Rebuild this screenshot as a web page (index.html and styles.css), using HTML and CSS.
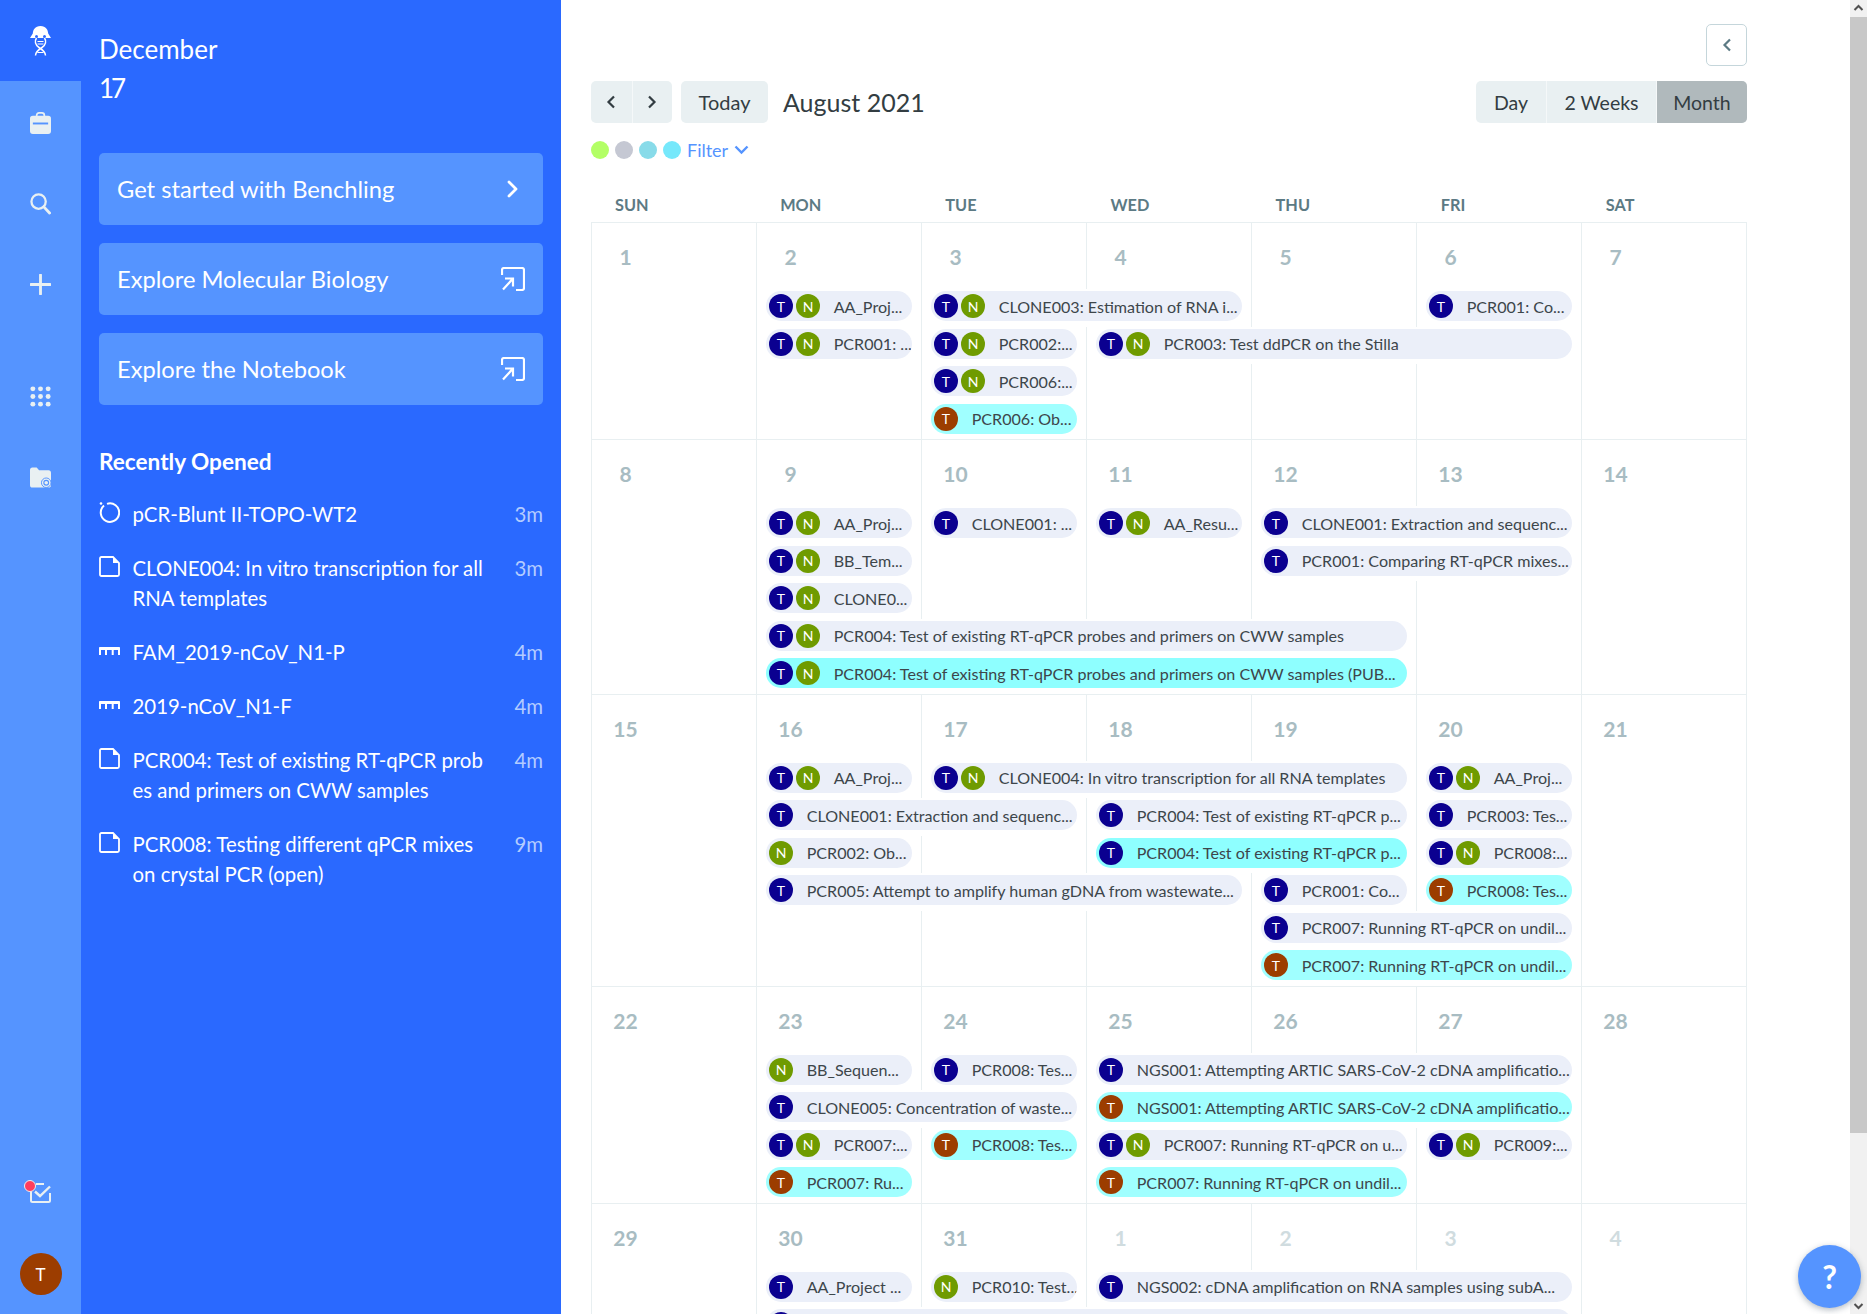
FILE: index.html
```html
<!DOCTYPE html>
<html lang="en">
<head>
<meta charset="utf-8">
<title>Benchling</title>
<link rel="stylesheet" href="styles.css">
</head>
<body>
<div class="app">
  <nav class="rail">
    <div class="rail-logo">
      <svg class="logo" viewBox="0 0 21 30" width="21" height="30"><path d="M10.5 0C5 0 3 4 2.800 7.500L0 12H21L18.200 7.500C18 4 16 0 10.500 0z" fill="#fff"/><circle cx="6.500" cy="10.500" r="1.500" fill="#2a69ff"/><circle cx="14.500" cy="10.500" r="1.500" fill="#2a69ff"/><path d="M6.500 12C4.500 15 5 19 9 21.500C13 24 15.500 26 15.500 29.500M14.500 12C16.500 15 16 19 12 21.500C8 24 5.500 26 5.500 29.500" fill="none" stroke="#fff" stroke-width="1.500"/><path d="M7.500 15.500h6M7.500 18h6M7.500 26.500h6" stroke="#fff" stroke-width="1.200"/></svg>
    </div>
    <div class="rail-body">
      <a class="rail-btn"><svg viewBox="0 0 22 23" width="21" height="22"><path d="M7 5V3.500C7 2 8 1 9.500 1h3C14 1 15 2 15 3.500V5" fill="none" stroke="#e9f0f2" stroke-width="1.800"/><rect y="4" width="22" height="19" rx="3" fill="#e9f0f2"/><rect x="3" y="11" width="16" height="2" fill="#5594ff"/></svg></a>
      <a class="rail-btn"><svg viewBox="0 0 22 23" width="21" height="22"><circle cx="9" cy="9" r="7.500" fill="none" stroke="#e9f0f2" stroke-width="2.400"/><path d="M14.500 14.500l6 6.500" stroke="#e9f0f2" stroke-width="3" stroke-linecap="round"/></svg></a>
      <a class="rail-btn"><svg viewBox="0 0 22 22" width="21" height="21"><path d="M11 1v20M1 11h20" stroke="#e9f0f2" stroke-width="3" stroke-linecap="round"/></svg></a>
      <a class="rail-btn rail-gap"><svg viewBox="0 0 22 22" width="21" height="21" fill="#e9f0f2"><circle cx="3" cy="3" r="2.600"/><circle cx="11" cy="3" r="2.600"/><circle cx="19" cy="3" r="2.600"/><circle cx="3" cy="11" r="2.600"/><circle cx="11" cy="11" r="2.600"/><circle cx="19" cy="11" r="2.600"/><circle cx="3" cy="19" r="2.600"/><circle cx="11" cy="19" r="2.600"/><circle cx="19" cy="19" r="2.600"/></svg></a>
      <a class="rail-btn"><svg viewBox="0 0 22 22" width="21" height="21"><path d="M0 3C0 1.500 1 .5 2.500 .5H7L9.500 3.500H19.500C21 3.500 22 4.500 22 6V19C22 20.500 21 21.500 19.500 21.500H2.500C1 21.500 0 20.500 0 19z" fill="#e9f0f2"/><circle cx="17" cy="16.500" r="5" fill="#e9f0f2" stroke="#5594ff" stroke-width="1"/><circle cx="17" cy="16.500" r="2.500" fill="none" stroke="#5594ff" stroke-width="1.200"/></svg></a>
      <div class="rail-foot">
        <a class="task"><svg viewBox="0 0 21 20" width="21" height="20"><path d="M14 1H6M1 8V17.500C1 18.500 1.500 19 2.500 19H18.500C19.500 19 20 18.500 20 17.500V10" fill="none" stroke="#e9f0f2" stroke-width="2"/><path d="M5 8.500L10 13L20 3.500" fill="none" stroke="#e9f0f2" stroke-width="2.400"/></svg><span class="task-dot"></span></a>
        <span class="me">T</span>
      </div>
    </div>
  </nav>

  <aside class="panel">
    <div class="date date-month">December</div>
    <div class="date date-day">17</div>
    <div class="cards">
      <a class="card">Get started with Benchling<svg class="card-chev" viewBox="0 0 12 18" width="12" height="18"><path d="M2 2l7 7-7 7" fill="none" stroke="#fff" stroke-width="2.800" stroke-linecap="round" stroke-linejoin="round"/></svg></a>
      <a class="card">Explore Molecular Biology<svg viewBox="0 0 24 24" width="24" height="24"><path d="M1 8V3C1 1.800 1.800 1 3 1H21C22.200 1 23 1.800 23 3V21C23 22.200 22.200 23 21 23H15M4 11.500H12V19.500M12 11.500L2 22.500" fill="none" stroke="#fff" stroke-width="2.200"/></svg></a>
      <a class="card">Explore the Notebook<svg viewBox="0 0 24 24" width="24" height="24"><path d="M1 8V3C1 1.800 1.800 1 3 1H21C22.200 1 23 1.800 23 3V21C23 22.200 22.200 23 21 23H15M4 11.500H12V19.500M12 11.500L2 22.500" fill="none" stroke="#fff" stroke-width="2.200"/></svg></a>
    </div>
    <h2 class="recent-title">Recently Opened</h2>
    <ul class="recent">
      <li class="item"><svg viewBox="0 0 21 21" width="21" height="21"><path d="M5 3.600A9.200 9.200 0 1 0 8 1.900" fill="none" stroke="#fff" stroke-width="2"/><circle cx="2" cy="1.500" r="1.300" fill="#fff"/></svg><span class="item-name">pCR-Blunt II-TOPO-WT2</span><span class="item-time">3m</span></li>
      <li class="item"><svg viewBox="0 0 21 21" width="21" height="21"><path d="M2.500 1H14L20 7V18.500C20 19.500 19.500 20 18.500 20H2.500C1.500 20 1 19.500 1 18.500V2.500C1 1.500 1.500 1 2.500 1z" fill="none" stroke="#fff" stroke-width="1.800"/><path d="M14 1V7H20z" fill="#fff"/></svg><span class="item-name">CLONE004: In vitro transcription for all<br>RNA templates</span><span class="item-time">3m</span></li>
      <li class="item"><svg class="ruler" viewBox="0 0 21 8" width="21" height="8"><path d="M1 0H20C20.600 0 21 .4 21 1V8H19V3H14.700V8H12.700V3H8V8H6V3H2V8H0V1C0 .4 .4 0 1 0z" fill="#fff"/></svg><span class="item-name">FAM_2019-nCoV_N1-P</span><span class="item-time">4m</span></li>
      <li class="item"><svg class="ruler" viewBox="0 0 21 8" width="21" height="8"><path d="M1 0H20C20.600 0 21 .4 21 1V8H19V3H14.700V8H12.700V3H8V8H6V3H2V8H0V1C0 .4 .4 0 1 0z" fill="#fff"/></svg><span class="item-name">2019-nCoV_N1-F</span><span class="item-time">4m</span></li>
      <li class="item"><svg viewBox="0 0 21 21" width="21" height="21"><path d="M2.500 1H14L20 7V18.500C20 19.500 19.500 20 18.500 20H2.500C1.500 20 1 19.500 1 18.500V2.500C1 1.500 1.500 1 2.500 1z" fill="none" stroke="#fff" stroke-width="1.800"/><path d="M14 1V7H20z" fill="#fff"/></svg><span class="item-name">PCR004: Test of existing RT-qPCR prob<br>es and primers on CWW samples</span><span class="item-time">4m</span></li>
      <li class="item"><svg viewBox="0 0 21 21" width="21" height="21"><path d="M2.500 1H14L20 7V18.500C20 19.500 19.500 20 18.500 20H2.500C1.500 20 1 19.500 1 18.500V2.500C1 1.500 1.500 1 2.500 1z" fill="none" stroke="#fff" stroke-width="1.800"/><path d="M14 1V7H20z" fill="#fff"/></svg><span class="item-name">PCR008: Testing different qPCR mixes<br>on crystal PCR (open)</span><span class="item-time">9m</span></li>
    </ul>
  </aside>

  <main class="main">
    <div class="collapse-row"><button class="collapse"><svg viewBox="0 0 10 14" width="10" height="14"><path d="M8 1.500L2.500 7L8 12.500" fill="none" stroke="#5c7a84" stroke-width="2.200"/></svg></button></div>
    <div class="toolbar">
      <div class="seg">
        <button class="seg-btn nav"><svg viewBox="0 0 10 14" width="10" height="14"><path d="M8 1.500L2.500 7L8 12.500" fill="none" stroke="#333d42" stroke-width="2.200"/></svg></button>
        <button class="seg-btn nav"><svg viewBox="0 0 10 14" width="10" height="14"><path d="M2 1.500L7.500 7L2 12.500" fill="none" stroke="#333d42" stroke-width="2.200"/></svg></button>
      </div>
      <button class="today">Today</button>
      <h1 class="month-title">August 2021</h1>
      <div class="seg seg-right">
        <button class="seg-btn view v-day">Day</button>
        <button class="seg-btn view v-2w">2 Weeks</button>
        <button class="seg-btn view v-month active">Month</button>
      </div>
    </div>
    <div class="filters">
      <span class="dot green"></span><span class="dot grey"></span><span class="dot teal"></span><span class="dot sky"></span>
      <a class="filter">Filter<svg viewBox="0 0 15 10" width="15" height="10"><path d="M1.500 1.500L7.500 7.500L13.500 1.500" fill="none" stroke="#5594ff" stroke-width="2.400"/></svg></a>
    </div>
    <div class="dow"><span>SUN</span><span>MON</span><span>TUE</span><span>WED</span><span>THU</span><span>FRI</span><span>SAT</span></div>
    <div class="cal">
      <section class="week w4">
        <div class="day c1"><b>1</b></div><div class="day c2"><b>2</b></div><div class="day c3"><b>3</b></div><div class="day c4"><b>4</b></div><div class="day c5"><b>5</b></div><div class="day c6"><b>6</b></div><div class="day c7"><b>7</b></div>
        <div class="ev c2 r1"><div class="pill"><i class="av t">T</i><i class="av n">N</i><span>AA_Proj...</span></div></div>
        <div class="ev c3 s2 r1"><div class="pill"><i class="av t">T</i><i class="av n">N</i><span>CLONE003: Estimation of RNA i...</span></div></div>
        <div class="ev c6 r1"><div class="pill"><i class="av t">T</i><span>PCR001: Co...</span></div></div>
        <div class="ev c2 r2"><div class="pill"><i class="av t">T</i><i class="av n">N</i><span>PCR001: ...</span></div></div>
        <div class="ev c3 r2"><div class="pill"><i class="av t">T</i><i class="av n">N</i><span>PCR002:...</span></div></div>
        <div class="ev c4 s3 r2"><div class="pill"><i class="av t">T</i><i class="av n">N</i><span>PCR003: Test ddPCR on the Stilla</span></div></div>
        <div class="ev c3 r3"><div class="pill"><i class="av t">T</i><i class="av n">N</i><span>PCR006:...</span></div></div>
        <div class="ev c3 r4"><div class="pill cy"><i class="av b">T</i><span>PCR006: Ob...</span></div></div>
      </section>
      <section class="week w5">
        <div class="day c1"><b>8</b></div><div class="day c2"><b>9</b></div><div class="day c3"><b>10</b></div><div class="day c4"><b>11</b></div><div class="day c5"><b>12</b></div><div class="day c6"><b>13</b></div><div class="day c7"><b>14</b></div>
        <div class="ev c2 r1"><div class="pill"><i class="av t">T</i><i class="av n">N</i><span>AA_Proj...</span></div></div>
        <div class="ev c3 r1"><div class="pill"><i class="av t">T</i><span>CLONE001: ...</span></div></div>
        <div class="ev c4 r1"><div class="pill"><i class="av t">T</i><i class="av n">N</i><span>AA_Resu...</span></div></div>
        <div class="ev c5 s2 r1"><div class="pill"><i class="av t">T</i><span>CLONE001: Extraction and sequenc...</span></div></div>
        <div class="ev c2 r2"><div class="pill"><i class="av t">T</i><i class="av n">N</i><span>BB_Tem...</span></div></div>
        <div class="ev c5 s2 r2"><div class="pill"><i class="av t">T</i><span>PCR001: Comparing RT-qPCR mixes...</span></div></div>
        <div class="ev c2 r3"><div class="pill"><i class="av t">T</i><i class="av n">N</i><span>CLONE0...</span></div></div>
        <div class="ev c2 s4 r4"><div class="pill"><i class="av t">T</i><i class="av n">N</i><span>PCR004: Test of existing RT-qPCR probes and primers on CWW samples</span></div></div>
        <div class="ev c2 s4 r5"><div class="pill cy2"><i class="av t">T</i><i class="av n">N</i><span>PCR004: Test of existing RT-qPCR probes and primers on CWW samples (PUB...</span></div></div>
      </section>
      <section class="week w6">
        <div class="day c1"><b>15</b></div><div class="day c2"><b>16</b></div><div class="day c3"><b>17</b></div><div class="day c4"><b>18</b></div><div class="day c5"><b>19</b></div><div class="day c6"><b>20</b></div><div class="day c7"><b>21</b></div>
        <div class="ev c2 r1"><div class="pill"><i class="av t">T</i><i class="av n">N</i><span>AA_Proj...</span></div></div>
        <div class="ev c3 s3 r1"><div class="pill"><i class="av t">T</i><i class="av n">N</i><span>CLONE004: In vitro transcription for all RNA templates</span></div></div>
        <div class="ev c6 r1"><div class="pill"><i class="av t">T</i><i class="av n">N</i><span>AA_Proj...</span></div></div>
        <div class="ev c2 s2 r2"><div class="pill"><i class="av t">T</i><span>CLONE001: Extraction and sequenc...</span></div></div>
        <div class="ev c4 s2 r2"><div class="pill"><i class="av t">T</i><span>PCR004: Test of existing RT-qPCR p...</span></div></div>
        <div class="ev c6 r2"><div class="pill"><i class="av t">T</i><span>PCR003: Tes...</span></div></div>
        <div class="ev c2 r3"><div class="pill"><i class="av n">N</i><span>PCR002: Ob...</span></div></div>
        <div class="ev c4 s2 r3"><div class="pill cy2"><i class="av t">T</i><span>PCR004: Test of existing RT-qPCR p...</span></div></div>
        <div class="ev c6 r3"><div class="pill"><i class="av t">T</i><i class="av n">N</i><span>PCR008:...</span></div></div>
        <div class="ev c2 s3 r4"><div class="pill"><i class="av t">T</i><span>PCR005: Attempt to amplify human gDNA from wastewate...</span></div></div>
        <div class="ev c5 r4"><div class="pill"><i class="av t">T</i><span>PCR001: Co...</span></div></div>
        <div class="ev c6 r4"><div class="pill cy"><i class="av b">T</i><span>PCR008: Tes...</span></div></div>
        <div class="ev c5 s2 r5"><div class="pill"><i class="av t">T</i><span>PCR007: Running RT-qPCR on undil...</span></div></div>
        <div class="ev c5 s2 r6"><div class="pill cy"><i class="av b">T</i><span>PCR007: Running RT-qPCR on undil...</span></div></div>
      </section>
      <section class="week w4">
        <div class="day c1"><b>22</b></div><div class="day c2"><b>23</b></div><div class="day c3"><b>24</b></div><div class="day c4"><b>25</b></div><div class="day c5"><b>26</b></div><div class="day c6"><b>27</b></div><div class="day c7"><b>28</b></div>
        <div class="ev c2 r1"><div class="pill"><i class="av n">N</i><span>BB_Sequen...</span></div></div>
        <div class="ev c3 r1"><div class="pill"><i class="av t">T</i><span>PCR008: Tes...</span></div></div>
        <div class="ev c4 s3 r1"><div class="pill"><i class="av t">T</i><span>NGS001: Attempting ARTIC SARS-CoV-2 cDNA amplificatio...</span></div></div>
        <div class="ev c2 s2 r2"><div class="pill"><i class="av t">T</i><span>CLONE005: Concentration of waste...</span></div></div>
        <div class="ev c4 s3 r2"><div class="pill cy"><i class="av b">T</i><span>NGS001: Attempting ARTIC SARS-CoV-2 cDNA amplificatio...</span></div></div>
        <div class="ev c2 r3"><div class="pill"><i class="av t">T</i><i class="av n">N</i><span>PCR007:...</span></div></div>
        <div class="ev c3 r3"><div class="pill cy"><i class="av b">T</i><span>PCR008: Tes...</span></div></div>
        <div class="ev c4 s2 r3"><div class="pill"><i class="av t">T</i><i class="av n">N</i><span>PCR007: Running RT-qPCR on u...</span></div></div>
        <div class="ev c6 r3"><div class="pill"><i class="av t">T</i><i class="av n">N</i><span>PCR009:...</span></div></div>
        <div class="ev c2 r4"><div class="pill cy"><i class="av b">T</i><span>PCR007: Ru...</span></div></div>
        <div class="ev c4 s2 r4"><div class="pill cy"><i class="av b">T</i><span>PCR007: Running RT-qPCR on undil...</span></div></div>
      </section>
      <section class="week w4">
        <div class="day c1"><b>29</b></div><div class="day c2"><b>30</b></div><div class="day c3"><b>31</b></div><div class="day c4 other"><b>1</b></div><div class="day c5 other"><b>2</b></div><div class="day c6 other"><b>3</b></div><div class="day c7 other"><b>4</b></div>
        <div class="ev c2 r1"><div class="pill"><i class="av t">T</i><span>AA_Project ...</span></div></div>
        <div class="ev c3 r1"><div class="pill"><i class="av n">N</i><span>PCR010: Test...</span></div></div>
        <div class="ev c4 s3 r1"><div class="pill"><i class="av t">T</i><span>NGS002: cDNA amplification on RNA samples using subA...</span></div></div>
        <div class="ev c2 s5 r2"><div class="pill"><i class="av t"></i></div></div>
      </section>
    </div>
  </main>

  <div class="scrollbar">
    <svg class="sb-arrow" viewBox="0 0 17 17" width="17" height="17"><path d="M4.500 10L8.500 6L12.500 10" fill="none" stroke="#505050" stroke-width="2"/></svg>
    <div class="sb-thumb"></div>
    <svg class="sb-arrow sb-down" viewBox="0 0 17 17" width="17" height="17"><path d="M4.500 7L8.500 11L12.500 7" fill="none" stroke="#505050" stroke-width="2"/></svg>
  </div>
  <button class="help">?</button>
</div>
</body>
</html>
```
FILE: styles.css
```css
* { box-sizing: border-box; }
html, body { margin: 0; height: 100%; overflow: hidden; }
body { font-family: "Lato", "Liberation Sans", sans-serif; color: #333d42; background: #fff; }
button { font: inherit; color: inherit; border: 0; padding: 0; background: none; }
ul { list-style: none; margin: 0; padding: 0; }
h1, h2 { margin: 0; font-weight: 400; }

.app { display: flex; height: 1314px; overflow: hidden; position: relative; }

/* rail */
.rail { width: 81px; flex: none; display: flex; flex-direction: column; background: #5594ff; }
.rail-logo { height: 81px; background: #2a69ff; display: flex; justify-content: center; padding-top: 26px; }
.logo { display: block; }
.rail-body { flex: 1; display: flex; flex-direction: column; align-items: center; padding-top: 1px; }
.rail-btn { height: 81px; display: flex; align-items: center; justify-content: center; }
.rail-gap { margin-top: 31px; }
.rail-foot { margin-top: auto; display: flex; flex-direction: column; align-items: center; padding-bottom: 19px; }
.task { position: relative; display: block; width: 21px; height: 20px; margin-bottom: 50px; }
.task svg { display: block; }
.task-dot { position: absolute; left: -6px; top: -3px; width: 12px; height: 12px; border-radius: 50%; background: #ff3d5e; border: 1px solid #e9f0f2; }
.me { width: 42px; height: 42px; border-radius: 50%; background: #9c3d00; color: #fff; font-size: 17px; display: flex; align-items: center; justify-content: center; }

/* panel */
.panel { width: 480px; flex: none; background: #2a69ff; color: #fff; padding: 30px 18px 0; }
.date { font-size: 26px; line-height: 40px; }
.date-month { line-height: 38px; }
.date-day { letter-spacing: -3px; }
.cards { margin-top: 45px; display: flex; flex-direction: column; gap: 18px; }
.card { height: 72px; border-radius: 5px; background: #5594ff; display: flex; align-items: center; justify-content: space-between; padding: 0 18px; font-size: 23.700px; }
.card-chev { margin-right: 6px; }
.recent-title { font-size: 22.600px; font-weight: 700; line-height: 30px; margin-top: 42px; }
.recent { margin-top: 22px; display: flex; flex-direction: column; gap: 24px; }
.item { display: flex; font-size: 20.400px; line-height: 30px; position: relative; padding-left: 33.500px; justify-content: space-between; }
.item svg { position: absolute; left: 0; top: 3px; }
.item .ruler { top: 10px; }
.item-time { color: #b3ccff; }

/* main */
.main { flex: 1; min-width: 0; padding: 24px 103px 0 30px; overflow: hidden; }
.collapse-row { display: flex; justify-content: flex-end; height: 42px; }
.collapse { width: 41px; height: 42px; border: 1px solid #c5d6db; border-radius: 5px; display: flex; align-items: center; justify-content: center; background: #fff; }
.toolbar { display: flex; align-items: center; margin-top: 15px; height: 42px; }
.seg { display: flex; border-radius: 5px; overflow: hidden; height: 42px; background: #e9f0f2; }
.seg-right { margin-left: auto; }
.seg-btn { display: flex; align-items: center; justify-content: center; height: 42px; border-left: 1px solid #f5f8f9; }
.seg-btn:first-child { border-left: 0; }
.nav { width: 40.500px; }
.view { font-size: 19.500px; }
.v-day { width: 70px; }
.v-2w { width: 110px; }
.v-month { width: 91px; }
.active { background: #b0b9bc; }
.today { width: 87px; height: 42px; margin-left: 9px; background: #e9f0f2; border-radius: 5px; font-size: 20px; }
.month-title { font-size: 25px; margin-left: 15px; }
.filters { display: flex; align-items: center; height: 18px; margin-top: 18px; gap: 6px; }
.dot { width: 18px; height: 18px; border-radius: 50%; }
.green { background: #b3ff66; }
.grey { background: #c5c8d3; }
.teal { background: #88dbe9; }
.sky { background: #76e8fb; }
.filter { color: #5594ff; font-size: 18px; display: flex; align-items: center; gap: 6px; }
.dow { display: grid; grid-template-columns: repeat(7, 1fr); margin-top: 35px; height: 28px; font-size: 16.300px; font-weight: 700; color: #5c7a84; line-height: 22px; }
.dow span { padding-left: 24px; }

/* calendar */
.week { display: grid; grid-template-columns: repeat(7, 1fr); border-top: 1px solid #e8eff1; border-right: 1px solid #e8eff1; }
.w4 { grid-template-rows: 66px repeat(4, 37.500px); }
.w5 { grid-template-rows: 66px repeat(5, 37.500px); }
.w6 { grid-template-rows: 66px repeat(6, 37.500px); }
.day { grid-row: 1 / -1; border-left: 1px solid #e8eff1; }
.day b { display: block; width: 67px; margin-top: 20px; text-align: center; font-size: 21px; line-height: 28px; font-weight: 700; color: #a8bcc2; }
.other b { color: #d0dcdf; }
.c1 { grid-column-start: 1; }
.c2 { grid-column-start: 2; }
.c3 { grid-column-start: 3; }
.c4 { grid-column-start: 4; }
.c5 { grid-column-start: 5; }
.c6 { grid-column-start: 6; }
.c7 { grid-column-start: 7; }
.s2 { grid-column-end: span 2; }
.s3 { grid-column-end: span 3; }
.s4 { grid-column-end: span 4; }
.s5 { grid-column-end: span 5; }
.r1 { grid-row-start: 2; }
.r2 { grid-row-start: 3; }
.r3 { grid-row-start: 4; }
.r4 { grid-row-start: 5; }
.r5 { grid-row-start: 6; }
.r6 { grid-row-start: 7; }
.ev { padding: 2px 9.500px 0 10px; min-width: 0; z-index: 1; }
.s2, .s3, .s4, .s5 { background: #fff; margin-left: 1px; padding-left: 9px; }
.pill { height: 30px; border-radius: 15px; background: #ebeff9; display: flex; align-items: center; padding-left: 3px; gap: 3px; font-size: 16.100px; color: #3d464b; overflow: hidden; white-space: nowrap; }
.pill span { margin-left: 10.700px; }
.cy { background: #a0ffff; }
.cy2 { background: #8effff; }
.av { flex: none; width: 24px; height: 24px; border-radius: 50%; color: #fff; font-style: normal; font-size: 14px; display: flex; align-items: center; justify-content: center; }
.t { background: #0b0090; }
.n { background: #6f9b00; }
.b { background: #9c3d00; }

/* scrollbar + help */
.scrollbar { width: 17px; flex: none; background: #f1f1f1; position: relative; }
.sb-arrow { display: block; }
.sb-thumb { height: 1116px; background: #c8c8c8; }
.sb-down { position: absolute; bottom: 0; left: 0; }
.help { position: absolute; left: 1798px; top: 1245px; width: 63px; height: 63px; border-radius: 50%; background: #5594ff; color: #fff; font-size: 32px; font-weight: 700; box-shadow: 0 2px 6px rgba(40, 60, 80, .35); }
```
